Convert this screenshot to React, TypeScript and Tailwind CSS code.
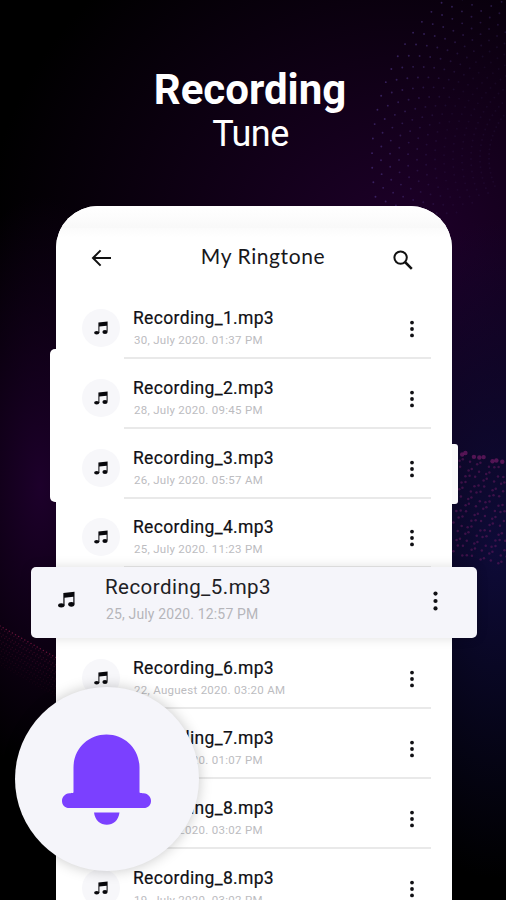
import React from "react";

type Row = { title: string; date: string; height: string };

const rows: Row[] = [
  { title: "Recording_1.mp3", date: "30, July 2020. 01:37 PM", height: "h-[70px]" },
  { title: "Recording_2.mp3", date: "28, July 2020. 09:45 PM", height: "h-[70px]" },
  { title: "Recording_3.mp3", date: "26, July 2020. 05:57 AM", height: "h-[69px]" },
  { title: "Recording_4.mp3", date: "25, July 2020. 11:23 PM", height: "h-[71px]" },
  { title: "", date: "", height: "h-[70px]" },
  { title: "Recording_6.mp3", date: "22, Auguest 2020. 03:20 AM", height: "h-[70px]" },
  { title: "Recording_7.mp3", date: "20, July 2020. 01:07 PM", height: "h-[70px]" },
  { title: "Recording_8.mp3", date: "19, July 2020. 03:02 PM", height: "h-[70px]" },
  { title: "Recording_8.mp3", date: "19, July 2020. 03:02 PM", height: "h-[70px]" },
];

function NoteIcon({ className }: { className: string }) {
  return (
    <svg viewBox="0 0 14 14" className={className} fill="#08080c">
      <path d="M4.4 1.6 L13.6 0.6 V10.6 H12.6 V4.8 L5.4 5.6 V12 H4.4 Z" />
      <ellipse cx="2.7" cy="11.8" rx="2.6" ry="1.8" />
      <ellipse cx="11" cy="11" rx="2.6" ry="1.9" />
    </svg>
  );
}

function Kebab({ className, r }: { className: string; r: number }) {
  return (
    <svg viewBox="0 0 6 20" className={className} fill="#101014">
      <circle cx="3" cy="3.6" r={r} />
      <circle cx="3" cy="10" r={r} />
      <circle cx="3" cy="16.4" r={r} />
    </svg>
  );
}

function Backdrop() {
  const dots: React.ReactElement[] = [];
  for (let ring = 0; ring < 14; ring++) {
    for (let i = 0; i < 44; i++) {
      const a = Math.PI * (0.84 + i * 0.024 + (ring % 2) * 0.012);
      const r = 173 - ring * 9;
      const x = 545 + Math.cos(a) * r;
      const y = 158 + Math.sin(a) * r * 1.12;
      if (x < 506) {
        dots.push(
          <circle key={`a${ring}-${i}`} cx={x} cy={y} r={0.95} fill="#50368c" opacity={Math.max(0.12, 0.6 - ring * 0.06)} />
        );
      }
    }
  }
  for (let row = 0; row < 15; row++) {
    for (let i = 0; i < 10; i++) {
      const sway = Math.sin(i * 2.3 + row * 1.7) * 1.6;
      dots.push(
        <circle
          key={`b${row}-${i}`}
          cx={455 + i * 6 + (row % 2) * 3 + sway}
          cy={452 + row * 7.2 + i * 1.3 + sway}
          r={row === 0 ? 2.2 : 1.25}
          fill="#6b1a62"
          opacity={row === 0 ? 0.75 : 0.5}
        />
      );
    }
  }
  for (let row = 0; row < 12; row++) {
    for (let i = 0; i < 19; i++) {
      dots.push(
        <circle
          key={`c${row}-${i}`}
          cx={i * 3.1 + (row % 2) * 1.5}
          cy={626 + row * 3.6 + i * 1.75}
          r={0.75}
          fill="#7d1742"
          opacity={row === 0 ? 0.8 : 0.36 - row * 0.025}
        />
      );
    }
  }
  return (
    <svg viewBox="0 0 506 900" className="absolute inset-0 h-[900px] w-[506px]">
      {dots}
    </svg>
  );
}

export default function App() {
  return (
    <main className="relative h-[900px] w-[506px] overflow-hidden bg-black bg-[radial-gradient(ellipse_110px_290px_at_8%_54%,#1d002b_0%,transparent_100%),radial-gradient(ellipse_150px_330px_at_98%_61%,#0e0b38_0%,transparent_100%),radial-gradient(ellipse_420px_370px_at_80%_27%,#1e002a_0%,transparent_100%)] font-['Roboto',sans-serif]">
      <Backdrop />
      <div className="relative flex h-[900px] flex-col items-center">
        <header className="flex h-[206px] shrink-0 flex-col items-center pt-[66px] text-white">
          <h1 className="ml-[-6px] text-[42px] leading-[48px] font-bold whitespace-nowrap">Recording</h1>
          <p className="ml-[-5px] text-[36px] leading-[41px] tracking-[-0.5px] whitespace-nowrap">Tune</p>
        </header>

        <section className="relative mr-[-2px] h-[694px] w-[396px] shrink-0">
          <div className="absolute top-[143px] left-[-6px] h-[153px] w-4 rounded-[5px] bg-white" />
          <div className="absolute top-[238px] right-[-6px] h-[60px] w-4 rounded-[3px] bg-[#fafafb]" />
          <div className="relative h-full overflow-hidden rounded-t-[42px] bg-white">
            <div className="h-[24px] bg-gradient-to-b from-white via-[#fcfcfc] to-[#f8f8f8]" />
            <div className="mt-[-2px] h-[60px] bg-gradient-to-b from-[#fbfbfb] to-white to-15% pr-[39px] pl-[35px]">
              <div className="flex items-start justify-between pt-[15px]">
                <svg viewBox="0 0 20 18" className="mt-[6px] h-[18px] w-5" fill="none" stroke="#111" strokeWidth="2">
                  <path d="M20 9 H2 M9.6 1.4 L2 9 L9.6 16.6" />
                </svg>
                <h2 className="pl-[22px] font-['Lato',sans-serif] text-[21px] leading-[26px] tracking-[0.6px] whitespace-nowrap text-[#17171b]">
                  My Ringtone
                </h2>
                <svg viewBox="0 0 20 20" className="mt-[7px] h-5 w-5" fill="none" stroke="#111" strokeWidth="2">
                  <circle cx="7.6" cy="7.6" r="6.2" />
                  <path d="M12 12 L18.8 18.8" strokeWidth="2.5" />
                </svg>
              </div>
            </div>
            <div className="flex flex-col">
              {rows.map((row, i) => (
                <div key={i} className={`${row.height} shrink-0 pr-[21px] pl-[26px]`}>
                  {row.title && (
                    <div className="flex h-[71px]">
                      <div className="mt-[21px] flex h-[38px] w-[38px] shrink-0 items-center justify-center rounded-full bg-[#f7f7fa]">
                        <NoteIcon className="mr-[1px] h-[14px] w-[14px]" />
                      </div>
                      <div className="ml-[4px] flex flex-1 justify-between border-b-2 border-[#e9e9e9] pl-[9px]">
                        <div className="pt-[19px] whitespace-nowrap">
                          <p className="text-[17.5px] leading-[22px] tracking-[0.34px] text-[#101014] [-webkit-text-stroke:0.2px_#101014]">{row.title}</p>
                          <p className="mt-[3px] ml-[1px] text-[11.5px] leading-[17px] tracking-[0.28px] text-[#bcbcbf]">{row.date}</p>
                        </div>
                        <Kebab className="mt-[31px] mr-[16px] h-5 w-[6px]" r={1.9} />
                      </div>
                    </div>
                  )}
                </div>
              ))}
            </div>
          </div>

          <article className="absolute top-[361px] left-[-25px] flex h-[71px] w-[446px] rounded-[5px] bg-[#f5f5fa] shadow-[0_0_12px_rgba(0,0,0,0.13)]">
            <NoteIcon className="mt-[24px] ml-[27px] h-[17px] w-[17px]" />
            <div className="ml-[30px] flex-1 pt-[8px] whitespace-nowrap">
              <p className="text-[20.5px] leading-[25px] tracking-[0.45px] text-[#202024]">Recording_5.mp3</p>
              <p className="mt-[4px] ml-[1px] text-[14px] leading-[20px] tracking-[0.15px] text-[#b5b5ba]">25, July 2020. 12:57 PM</p>
            </div>
            <Kebab className="mt-[22px] mr-[38px] h-[24px] w-[7px]" r={1.8} />
          </article>

          <div className="absolute top-[481px] left-[-41px] flex h-[184px] w-[184px] items-center justify-center rounded-full bg-[#f5f5fa] shadow-[0_0_14px_rgba(0,0,0,0.22)]">
            <svg viewBox="0 0 90 92" className="mt-[2px] h-[92px] w-[90px]" fill="#7b40ff">
              <path d="M11.5 58.5 V33.5 C11.5 15 26 0.5 44.5 0.5 C63 0.5 77.5 15 77.5 33.5 V58.5 C79 59.2 80 59.2 81.5 59.2 C91.5 60 91.5 74 81.5 74 H7.5 C-2.5 74 -2.5 60 7.5 59.2 C9 59.2 10 59.2 11.5 58.5 Z" />
              <path d="M32 78.5 H57.5 C56.5 86.5 51 90.8 44.8 90.8 C38.5 90.8 33 86.5 32 78.5 Z" />
            </svg>
          </div>
        </section>
      </div>
    </main>
  );
}
